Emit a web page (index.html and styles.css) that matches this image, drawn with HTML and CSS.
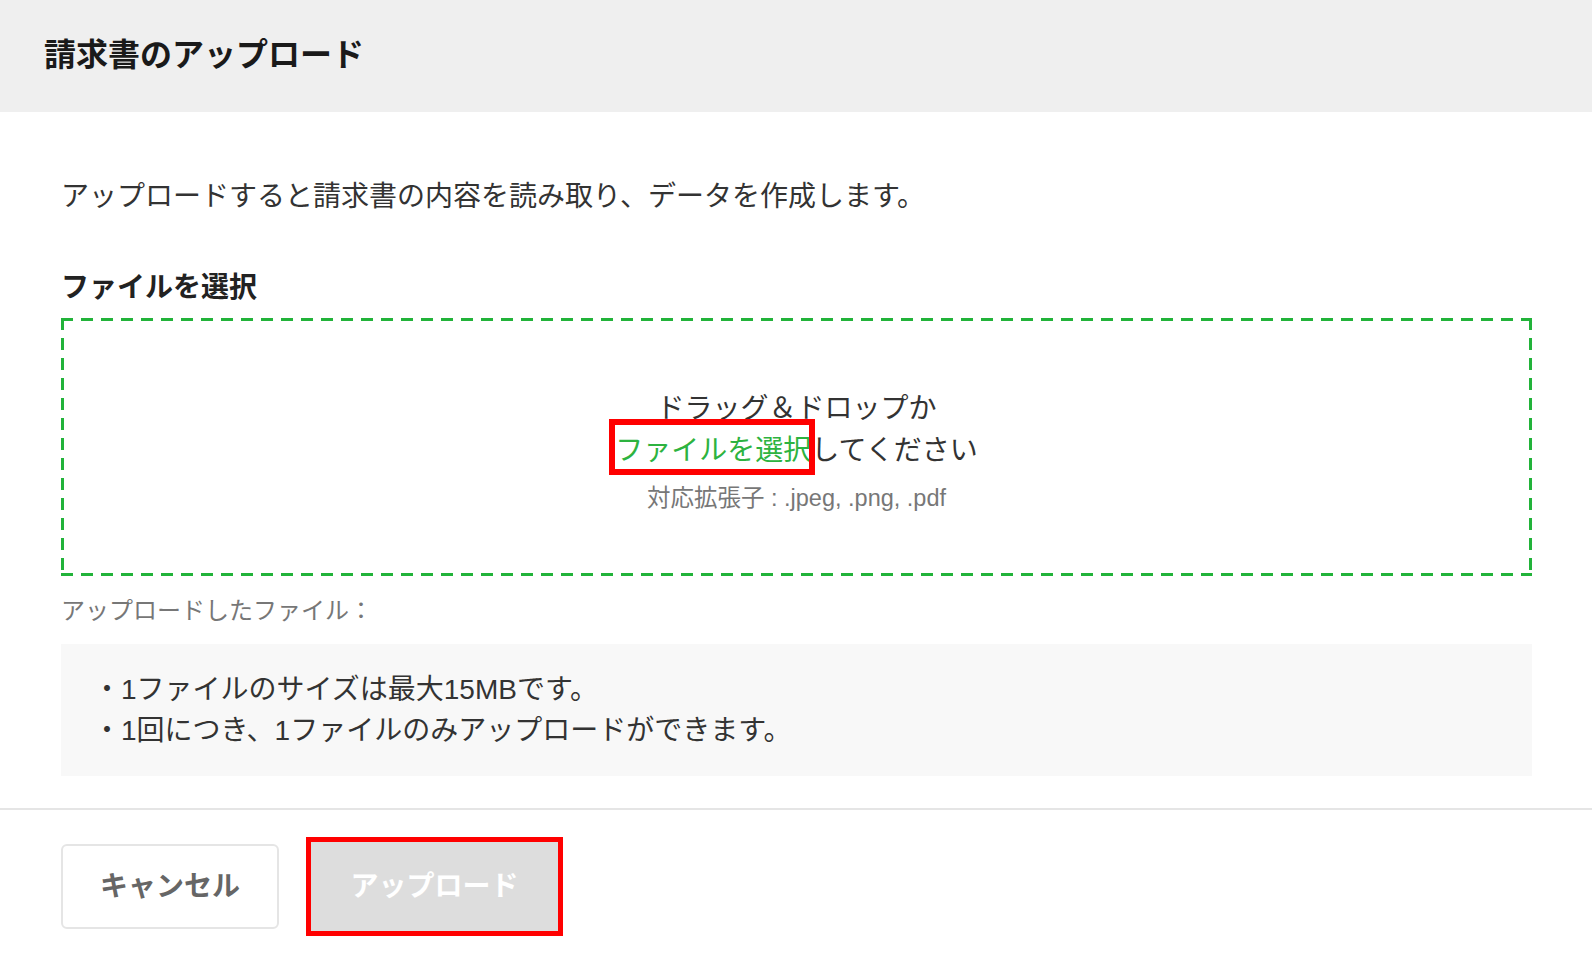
FILE: index.html
```html
<!DOCTYPE html>
<html lang="ja">
<head>
    <meta charset="UTF-8">
    <meta name="viewport" content="width=device-width, initial-scale=1.0">
    <title>請求書のアップロード</title>
    <link rel="stylesheet" href="styles.css">
</head>
<body>
    <div class="modal">
        <div class="modal-header">
            <h1>請求書のアップロード</h1>
        </div>

        <div class="modal-body">
            <p class="lead">アップロードすると請求書の内容を読み取り、データを作成します。</p>

            <h3 class="field-label">ファイルを選択</h3>
            <div class="dropzone">
                <p class="drop-line">ドラッグ＆ドロップか</p>
                <p class="drop-line"><span class="pick-link marked">ファイルを選択</span>してください</p>
                <p class="drop-ext">対応拡張子 : .jpeg, .png, .pdf</p>
            </div>

            <p class="uploaded-label">アップロードしたファイル：</p>

            <ul class="notes">
                <li>・1ファイルのサイズは最大15MBです。</li>
                <li>・1回につき、1ファイルのみアップロードができます。</li>
            </ul>
        </div>

        <div class="modal-footer">
            <button class="btn btn-cancel">キャンセル</button>
            <button class="btn btn-upload" disabled>アップロード</button>
        </div>
    </div>
</body>
</html>
```

FILE: styles.css
```css
* {
    margin: 0;
    padding: 0;
    box-sizing: border-box;
}

body {
    font-family: 'Liberation Sans', 'Noto Sans CJK JP', sans-serif;
    background-color: #fff;
    color: #333;
    min-height: 100vh;
}

.modal-header {
    height: 112px;
    background-color: #efefef;
    display: flex;
    align-items: center;
    padding-left: 44px;
}

.modal-header h1 {
    font-size: 32px;
    font-weight: bold;
    color: #1a1a1a;
    line-height: 1;
    margin-top: -3px;
}

.modal-body {
    padding: 65px 60px 32px 61px;
}

.lead {
    font-size: 28px;
    line-height: 40px;
    color: #333;
}

.field-label {
    margin-top: 51px;
    font-size: 28px;
    line-height: 40px;
    font-weight: bold;
    color: #222;
}

.dropzone {
    margin-top: 10px;
    height: 258px;
    padding-top: 70px;
    text-align: center;
    background:
        repeating-linear-gradient(90deg, #22b33a 0 12px, transparent 12px 20px) left top / 100% 3px no-repeat,
        repeating-linear-gradient(90deg, #22b33a 0 12px, transparent 12px 20px) left bottom / 100% 3px no-repeat,
        repeating-linear-gradient(180deg, #22b33a 0 12px, transparent 12px 20px) left top / 3px 100% no-repeat,
        repeating-linear-gradient(180deg, #22b33a 0 12px, transparent 12px 20px) right top / 3px 100% no-repeat;
}

.drop-line {
    font-size: 28px;
    line-height: 42px;
    color: #333;
}

.pick-link {
    color: #2db340;
    cursor: pointer;
}

.drop-ext {
    margin-top: 6px;
    font-size: 23.5px;
    line-height: 40px;
    color: #777;
}

.uploaded-label {
    margin-top: 18px;
    font-size: 24px;
    line-height: 34px;
    color: #777;
}

.notes {
    list-style: none;
    margin-top: 16px;
    background-color: #f8f8f8;
    padding: 25px 32px 25px;
}

.notes li {
    font-size: 28px;
    line-height: 41px;
    color: #333;
}

.modal-footer {
    border-top: 2px solid #e5e5e5;
    padding: 32px 61px 30px;
    display: flex;
    align-items: center;
    gap: 32px;
}

.btn {
    font-family: inherit;
    font-size: 28px;
    font-weight: bold;
    padding: 0 0 6px;
    white-space: nowrap;
    text-align: center;
    border-radius: 6px;
    cursor: pointer;
}

.btn-cancel {
    background-color: #fff;
    border: 2px solid #e5e5e5;
    color: #666;
    width: 218px;
    height: 85px;
}

.btn-upload {
    background-color: #dddddd;
    border: none;
    border-radius: 0;
    color: #fff;
    width: 247px;
    height: 89px;
    cursor: default;
    /* red annotation frame */
    outline: 5px solid #ff0000;
    outline-offset: 0;
}

/* red annotation frame */
.marked {
    position: relative;
    display: inline-block;
}

.marked::after {
    content: '';
    position: absolute;
    left: -6px;
    right: -4px;
    top: -11px;
    bottom: -3px;
    border: 6px solid #ff0000;
    pointer-events: none;
}
```
